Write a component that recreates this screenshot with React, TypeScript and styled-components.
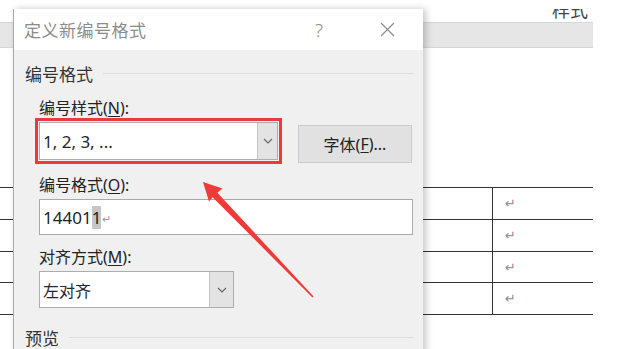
import styled, { createGlobalStyle } from 'styled-components';

const GlobalStyle = createGlobalStyle`
  html, body {
    margin: 0;
    padding: 0;
    background: #ffffff;
  }
`;

const FONT = `"Noto Sans", "Noto Sans CJK SC", sans-serif`;

const Screen = styled.div`
  position: relative;
  width: 620px;
  height: 349px;
  overflow: hidden;
  background: #ffffff;
  font-family: ${FONT};
`;

/* ---------- document behind the dialog ---------- */

const Doc = styled.div`
  display: flex;
  flex-direction: column;
  width: 593px;
`;

const TopStrip = styled.div`
  height: 22px;
  box-sizing: border-box;
  padding-top: 9px;
  display: flex;
  justify-content: flex-end;
  padding-right: 5px;
`;

// the ribbon label is cropped at the top, as in the screenshot
const StripClip = styled.div`
  height: 13px;
  overflow: hidden;

  > span {
    display: block;
    margin-top: -11px;
    font-size: 18px;
    line-height: 24px;
    color: #444;
  }
`;

const RibbonBand = styled.div`
  height: 24px;
  background: #e6e6e6;
  border-top: 1px solid #d6d6d6;
  border-bottom: 1px solid #d6d6d6;
`;

const Table = styled.div`
  margin-top: 139px;
  display: flex;
  flex-direction: column;
  border-bottom: 1.5px solid #333;
`;

const Row = styled.div<{ $h: number }>`
  display: grid;
  grid-template-columns: 492px 1fr;
  height: ${({ $h }) => $h}px;
  border-top: 1.5px solid #333;
`;

const Cell = styled.div`
  display: flex;
  align-items: center;
  padding-left: 12px;

  & + & {
    border-left: 1.5px solid #333;
  }
`;

const Mark = styled.span`
  font-family: "DejaVu Sans", sans-serif;
  font-size: 13px;
  color: #8a8a8a;
`;

/* ---------- dialog ---------- */

const Dialog = styled.div`
  position: absolute;
  left: 13px;
  top: 9px;
  width: 409px;
  bottom: -30px;
  display: flex;
  flex-direction: column;
  background: #f0f0f0;
  border-left: 1px solid #a8a8a8;
  box-shadow: 3px 0 7px rgba(0, 0, 0, 0.22);
`;

const TitleBar = styled.div`
  height: 41px;
  display: flex;
  align-items: center;
  background: #ffffff;
  padding-left: 10px;
`;

const Title = styled.div`
  flex: 1;
  font-size: 17px;
  color: #8c8c8c;
  letter-spacing: 0.5px;
`;

const TitleButton = styled.div<{ $w: number }>`
  width: ${({ $w }) => $w}px;
  display: flex;
  justify-content: center;
  align-items: center;
  color: #8c8c8c;
  font-size: 19px;
  font-weight: 300;
`;

const Body = styled.div`
  display: flex;
  flex-direction: column;
  padding: 0 9px 0 11px;
`;

const GroupHeader = styled.div<{ $top: number }>`
  display: flex;
  align-items: center;
  gap: 10px;
  margin-top: ${({ $top }) => $top}px;
  height: 20px;
  font-size: 17px;
  color: #333;

  &::after {
    content: '';
    flex: 1;
    height: 1px;
    background: #dcdcdc;
  }
`;

const Field = styled.div`
  display: flex;
  flex-direction: column;
  padding-left: 14px;
`;

const Label = styled.div<{ $top: number }>`
  margin-top: ${({ $top }) => $top}px;
  margin-bottom: 4px;
  height: 20px;
  font-size: 16px;
  line-height: 20px;
  color: #222;

  u {
    text-underline-offset: 2px;
  }
`;

const StyleRow = styled.div`
  display: flex;
  align-items: flex-end;
  gap: 16px;
  margin-left: -4px;
  margin-top: -4px;
`;

const Highlight = styled.div`
  border: 3px solid #ea3a3f;
  padding: 1px;
`;

const Combo = styled.div<{ $w: number; $h: number }>`
  display: flex;
  width: ${({ $w }) => $w}px;
  height: ${({ $h }) => $h}px;
  box-sizing: border-box;
  background: #ffffff;
  border: 1px solid #adadad;
`;

const ComboText = styled.div<{ $size: number }>`
  flex: 1;
  display: flex;
  align-items: center;
  padding-left: 3px;
  font-size: ${({ $size }) => $size}px;
  color: #1e2633;
`;

const ComboArrow = styled.div<{ $w: number }>`
  width: ${({ $w }) => $w}px;
  display: flex;
  align-items: center;
  justify-content: center;
  background: #e3e3e3;
  border-left: 1px solid #c4c4c4;
`;

const Button = styled.div`
  width: 114px;
  height: 38px;
  margin-bottom: 1px;
  box-sizing: border-box;
  display: flex;
  align-items: center;
  justify-content: center;
  background: #e1e1e1;
  border: 1px solid #cbcbcb;
  font-size: 16px;
  color: #222;

  u {
    text-underline-offset: 2px;
  }
`;

const TextInput = styled.div`
  width: 374px;
  height: 36px;
  box-sizing: border-box;
  display: flex;
  align-items: center;
  padding-left: 3px;
  background: #ffffff;
  border: 1px solid #a9a9a9;
  font-size: 17px;
  color: #222;
`;

const Selected = styled.span`
  background: #c6c6c6;
`;

const InputMark = styled.span`
  font-family: "DejaVu Sans", sans-serif;
  font-size: 11px;
  color: #9a9a9a;
  margin-left: 1px;
  margin-top: 4px;
`;

const Overlay = styled.svg`
  position: absolute;
  left: 0;
  top: 0;
  pointer-events: none;
`;

function Chevron() {
  return (
    <svg width="10" height="6" viewBox="0 0 10 6">
      <path d="M1 1 L5 5 L9 1" fill="none" stroke="#666" strokeWidth="1.1" />
    </svg>
  );
}

function CloseIcon() {
  return (
    <svg width="15" height="15" viewBox="0 0 15 15">
      <path d="M1 1 L14 14 M14 1 L1 14" stroke="#8c8c8c" strokeWidth="1.2" />
    </svg>
  );
}

const rows = [31, 31, 30, 31];

export default function App() {
  return (
    <Screen>
      <GlobalStyle />
      <Doc>
        <TopStrip>
          <StripClip>
            <span>样式</span>
          </StripClip>
        </TopStrip>
        <RibbonBand />
        <Table>
          {rows.map((h, i) => (
            <Row key={i} $h={h}>
              <Cell />
              <Cell>
                <Mark>↵</Mark>
              </Cell>
            </Row>
          ))}
        </Table>
      </Doc>

      <Dialog>
        <TitleBar>
          <Title>定义新编号格式</Title>
          <TitleButton $w={36}>?</TitleButton>
          <TitleButton $w={40} style={{ marginLeft: 30, marginRight: 16 }}>
            <CloseIcon />
          </TitleButton>
        </TitleBar>
        <Body>
          <GroupHeader $top={13}>编号格式</GroupHeader>
          <Field>
            <Label $top={15}>
              编号样式(<u>N</u>):
            </Label>
            <StyleRow>
              <Highlight>
                <Combo $w={239} $h={38}>
                  <ComboText $size={17}>1, 2, 3, ...</ComboText>
                  <ComboArrow $w={19}>
                    <Chevron />
                  </ComboArrow>
                </Combo>
              </Highlight>
              <Button>
                字体(<u>F</u>)...
              </Button>
            </StyleRow>
            <Label $top={11}>
              编号格式(<u>O</u>):
            </Label>
            <TextInput>
              14401<Selected>1</Selected>
              <InputMark>↵</InputMark>
            </TextInput>
            <Label $top={12}>
              对齐方式(<u>M</u>):
            </Label>
            <Combo $w={195} $h={37}>
              <ComboText $size={16}>左对齐</ComboText>
              <ComboArrow $w={23}>
                <Chevron />
              </ComboArrow>
            </Combo>
          </Field>
          <GroupHeader $top={19}>预览</GroupHeader>
        </Body>
      </Dialog>

      <Overlay width="620" height="349" viewBox="0 0 620 349">
        <polygon
          points="203,182 222.5,188.5 217.4,192.8 313.6,296.4 312.4,297.6 212.6,197.2 209,201.5"
          fill="#ef3a3a"
        />
      </Overlay>
    </Screen>
  );
}
